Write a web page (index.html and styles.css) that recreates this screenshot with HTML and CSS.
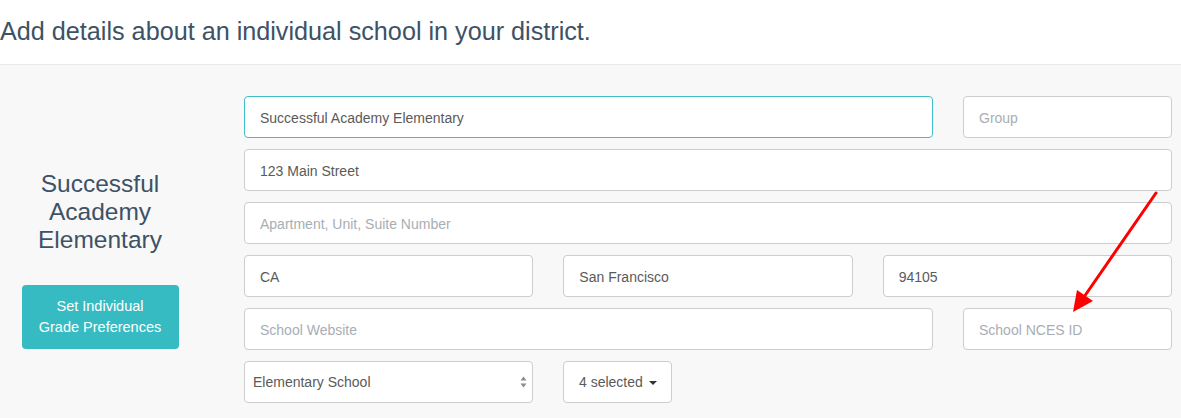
FILE: index.html
```html
<!DOCTYPE html>
<html lang="en">
<head>
  <meta charset="UTF-8">
  <title>School Details</title>
  <link rel="stylesheet" href="styles.css">
</head>
<body>
  <div class="page-head">
    <h1>Add details about an individual school in your district.</h1>
  </div>

  <div class="school-panel">
    <div class="school-side">
      <h2 class="school-name">Successful Academy Elementary</h2>
      <button class="grade-btn">Set Individual<br>Grade Preferences</button>
    </div>

    <form class="school-form">
      <div class="form-row">
        <input class="field field-focus wide" type="text" value="Successful Academy Elementary">
        <input class="field narrow" type="text" placeholder="Group">
      </div>
      <div class="form-row">
        <input class="field wide" type="text" value="123 Main Street">
      </div>
      <div class="form-row">
        <input class="field wide" type="text" placeholder="Apartment, Unit, Suite Number">
      </div>
      <div class="form-row">
        <input class="field third" type="text" value="CA">
        <input class="field third" type="text" value="San Francisco">
        <input class="field third" type="text" value="94105">
      </div>
      <div class="form-row">
        <input class="field wide" type="text" placeholder="School Website">
        <input class="field narrow" type="text" placeholder="School NCES ID">
      </div>
      <div class="form-row">
        <div class="select-wrap">
          <select class="field select-field">
            <option>Elementary School</option>
          </select>
          <svg class="select-arrows" width="7" height="12" viewBox="0 0 7 12">
            <path d="M3.5 0.5 L6.5 4.5 L0.5 4.5 Z" fill="#8c8c8c"/>
            <path d="M3.5 11.5 L6.5 7.5 L0.5 7.5 Z" fill="#8c8c8c"/>
          </svg>
        </div>
        <button type="button" class="multi-btn">4 selected <span class="caret"></span></button>
      </div>
    </form>
  </div>

  <!-- annotation arrow -->
  <svg class="note-arrow" width="1181" height="418" viewBox="0 0 1181 418">
    <line x1="1156" y1="193" x2="1084" y2="297" stroke="#ff0000" stroke-width="3" stroke-linecap="round"/>
    <path d="M1073 312 L1077 290 L1093 301 Z" fill="#ff0000"/>
  </svg>
</body>
</html>
```

FILE: styles.css
```css
/* basic page */
body {
  margin: 0;
  font-family: "Liberation Sans", Arial, sans-serif;
  background-color: #fff;
  color: #3d5265;
  position: relative;
  height: 418px;
  overflow: hidden;
}

.page-head {
  height: 64px;
  border-bottom: 1px solid #e9e9e9;
}

.page-head h1 {
  margin: 0;
  padding-top: 15px;
  font-size: 25.2px;
  line-height: 32px;
  font-weight: normal;
  color: #3d5265;
}

.school-panel {
  background-color: #f8f8f8;
  display: grid;
  grid-template-columns: 200px 928px;
  column-gap: 44px;
  padding: 31px 0 20px 0;
}

/* left column */
.school-side {
  display: flex;
  flex-direction: column;
  align-items: center;
  padding-top: 74px;
}

.school-name {
  margin: 0;
  font-size: 24.5px;
  line-height: 28px;
  font-weight: normal;
  text-align: center;
  color: #3d5265;
}

.grade-btn {
  margin-top: 31px;
  width: 157px;
  height: 64px;
  padding: 0;
  border: none;
  border-radius: 4px;
  background-color: #37bbc2;
  color: #fff;
  font-family: "Liberation Sans", Arial, sans-serif;
  font-size: 14.5px;
  line-height: 21px;
  cursor: pointer;
}

/* right column form */
.school-form {
  display: flex;
  flex-direction: column;
  gap: 11px;
}

.form-row {
  display: flex;
  gap: 30px;
}

.field {
  box-sizing: border-box;
  height: 42px;
  padding: 2px 15px 0 15px;
  border: 1px solid #cdcdcd;
  border-radius: 4px;
  background-color: #fff;
  color: #5a5a5a;
  font-family: "Liberation Sans", Arial, sans-serif;
  font-size: 14px;
  outline: none;
}

.field::placeholder {
  color: #a7aeb5;
}

.field-focus {
  border-color: #3fbfc8;
}

.wide {
  flex: 1;
  min-width: 0;
}

.narrow {
  width: 209px;
  flex: 0 0 209px;
}

.third {
  flex: 1;
  min-width: 0;
}

.select-wrap {
  position: relative;
  width: calc((100% - 60px) / 3);
}

.select-field {
  width: 100%;
  padding: 0 0 0 8px;
  -webkit-appearance: none;
  appearance: none;
}

.select-arrows {
  position: absolute;
  right: 6px;
  top: 15px;
  pointer-events: none;
}

.multi-btn {
  box-sizing: border-box;
  height: 42px;
  width: 109px;
  padding: 0;
  border: 1px solid #cdcdcd;
  border-radius: 4px;
  background-color: #fff;
  color: #5a5a5a;
  font-family: "Liberation Sans", Arial, sans-serif;
  font-size: 14px;
  cursor: pointer;
}

.caret {
  display: inline-block;
  width: 0;
  height: 0;
  margin-left: 2px;
  vertical-align: middle;
  border-top: 4px solid #333;
  border-left: 4px solid transparent;
  border-right: 4px solid transparent;
}

.note-arrow {
  position: absolute;
  left: 0;
  top: 0;
  pointer-events: none;
}
```
